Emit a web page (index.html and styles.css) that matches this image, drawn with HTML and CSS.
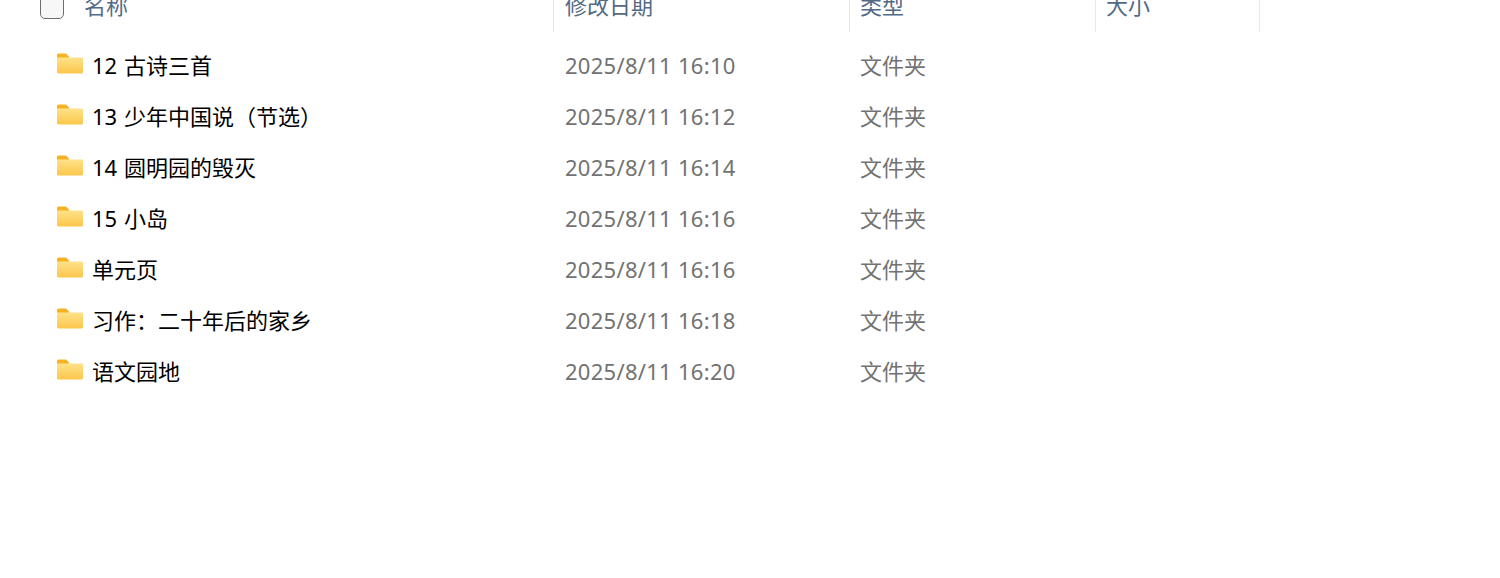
FILE: index.html
```html
<!DOCTYPE html>
<html lang="zh-CN">
<head>
<meta charset="utf-8">
<title>文件列表</title>
<link rel="stylesheet" href="styles.css">
</head>
<body>
<main class="list">
  <svg width="0" height="0" class="defs" aria-hidden="true">
    <defs>
      <linearGradient id="fg" x1="0" y1="0" x2="0" y2="1">
        <stop offset="0" stop-color="#ffe28a"/>
        <stop offset="1" stop-color="#fbc64a"/>
      </linearGradient>
      <symbol id="folder" viewBox="0 0 26 21">
        <path d="M0 2a1.5 1.5 0 0 1 1.5-1.5h6.5c1 0 1.6.4 2.3 1.2L12 3.5V7H0z" fill="#f5b324"/>
        <path d="M0 4.5h25a1 1 0 0 1 1 1V19a1.5 1.5 0 0 1-1.5 1.5h-23A1.5 1.5 0 0 1 0 19z" fill="url(#fg)"/>
      </symbol>
    </defs>
  </svg>
  <header class="head">
    <div class="hcell hname"><span class="check"></span><span>名称</span></div>
    <div class="hcell hdate">修改日期</div>
    <div class="hcell">类型</div>
    <div class="hcell">大小</div>
  </header>
  <div class="rows">
    <div class="row"><div class="name"><svg class="ico"><use href="#folder"/></svg><span>12 古诗三首</span></div><div class="meta date">2025/8/11 16:10</div><div class="meta">文件夹</div></div>
    <div class="row"><div class="name"><svg class="ico"><use href="#folder"/></svg><span>13 少年中国说（节选）</span></div><div class="meta date">2025/8/11 16:12</div><div class="meta">文件夹</div></div>
    <div class="row"><div class="name"><svg class="ico"><use href="#folder"/></svg><span>14 圆明园的毁灭</span></div><div class="meta date">2025/8/11 16:14</div><div class="meta">文件夹</div></div>
    <div class="row"><div class="name"><svg class="ico"><use href="#folder"/></svg><span>15 小岛</span></div><div class="meta date">2025/8/11 16:16</div><div class="meta">文件夹</div></div>
    <div class="row"><div class="name"><svg class="ico"><use href="#folder"/></svg><span>单元页</span></div><div class="meta date">2025/8/11 16:16</div><div class="meta">文件夹</div></div>
    <div class="row"><div class="name"><svg class="ico"><use href="#folder"/></svg><span>习作：二十年后的家乡</span></div><div class="meta date">2025/8/11 16:18</div><div class="meta">文件夹</div></div>
    <div class="row"><div class="name"><svg class="ico"><use href="#folder"/></svg><span>语文园地</span></div><div class="meta date">2025/8/11 16:20</div><div class="meta">文件夹</div></div>
  </div>
</main>
</body>
</html>
```
FILE: styles.css
```css
html, body {
  margin: 0;
  height: 100%;
  overflow: hidden;
  background: #fff;
}
body {
  font-family: "Noto Sans", "Noto Sans CJK SC", sans-serif;
  font-size: 22px;
}
.defs { display: block; height: 0; }
.list { margin-top: -20px; }
.head {
  display: grid;
  grid-template-columns: 554px 296px 246px 164px;
  height: 52px;
}
.hcell {
  display: flex;
  align-items: center;
  height: 52px;
  padding: 0 0 2px 10px;
  box-sizing: border-box;
  border-right: 1px solid #e8e8e8;
  color: #526a85;
  line-height: 30px;
}
.hname {
  padding-left: 40px;
  gap: 20px;
}
.hdate { padding-left: 11px; }
.check {
  width: 22px;
  height: 22px;
  border: 1.5px solid #6e6e6e;
  border-radius: 5px;
  background: #f7f7f7;
  flex: none;
  margin-top: 3px;
}
.rows { padding-top: 6px; }
.row {
  display: grid;
  grid-template-columns: 553px 295px 246px;
  height: 51px;
  align-items: center;
}
.name {
  display: flex;
  align-items: center;
  padding-left: 57px;
  gap: 9px;
  color: #000;
  word-spacing: 1px;
}
.ico {
  width: 26px;
  height: 21px;
  flex: none;
  margin-top: -1px;
}
.meta {
  padding-left: 12px;
  color: #727272;
}
.date {
  letter-spacing: 0.28px;
  padding-top: 2px;
}
```
